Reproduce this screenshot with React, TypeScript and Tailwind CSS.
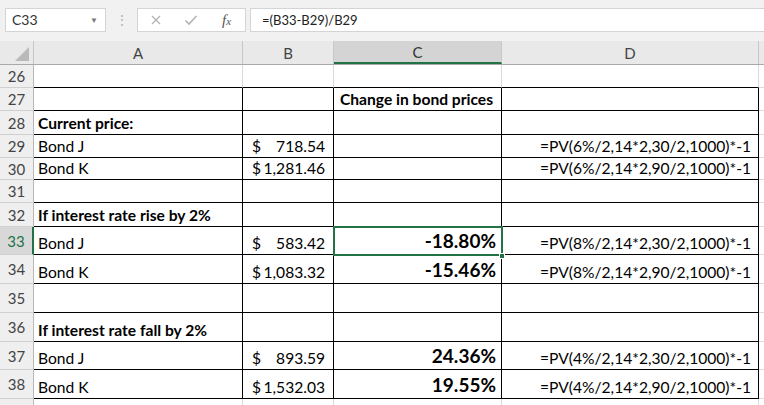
import React from "react";

type Cell = { text?: string; bold?: boolean; align?: "left" | "right"; money?: string; big?: boolean };
type Row = { n: number; h: string; cells: Cell[] };

const rows: Row[] = [
  { n: 26, h: "h-[23px]", cells: [{}, {}, {}, {}] },
  { n: 27, h: "h-[23px]", cells: [{}, {}, { text: "Change in bond prices", bold: true }, {}] },
  { n: 28, h: "h-[24px]", cells: [{ text: "Current price:", bold: true }, {}, {}, {}] },
  { n: 29, h: "h-[23px]", cells: [{ text: "Bond J" }, { money: "718.54" }, {}, { text: "=PV(6%/2,14*2,30/2,1000)*-1", align: "right" }] },
  { n: 30, h: "h-[22px]", cells: [{ text: "Bond K" }, { money: "1,281.46" }, {}, { text: "=PV(6%/2,14*2,90/2,1000)*-1", align: "right" }] },
  { n: 31, h: "h-[23px]", cells: [{}, {}, {}, {}] },
  { n: 32, h: "h-[24px]", cells: [{ text: "If interest rate rise by 2%", bold: true }, {}, {}, {}] },
  { n: 33, h: "h-[28px]", cells: [{ text: "Bond J" }, { money: "583.42" }, { text: "-18.80%", big: true }, { text: "=PV(8%/2,14*2,30/2,1000)*-1", align: "right" }] },
  { n: 34, h: "h-[29px]", cells: [{ text: "Bond K" }, { money: "1,083.32" }, { text: "-15.46%", big: true }, { text: "=PV(8%/2,14*2,90/2,1000)*-1", align: "right" }] },
  { n: 35, h: "h-[29px]", cells: [{}, {}, {}, {}] },
  { n: 36, h: "h-[29px]", cells: [{ text: "If interest rate fall by 2%", bold: true }, {}, {}, {}] },
  { n: 37, h: "h-[28px]", cells: [{ text: "Bond J" }, { money: "893.59" }, { text: "24.36%", big: true }, { text: "=PV(4%/2,14*2,30/2,1000)*-1", align: "right" }] },
  { n: 38, h: "h-[29px]", cells: [{ text: "Bond K" }, { money: "1,532.03" }, { text: "19.55%", big: true }, { text: "=PV(4%/2,14*2,90/2,1000)*-1", align: "right" }] },
  { n: 39, h: "h-[29px]", cells: [{}, {}, {}, {}] },
];

const pads = ["pl-[4px] pr-[4px]", "pl-[9px] pr-[8px]", "pl-[6px] pr-[5px]", "pl-[6px] pr-[7px]"];

function CellBox({ cell, row, col }: { cell: Cell; row: number; col: number }) {
  const right = row >= 27 && row <= 38 ? "border-r-black" : "border-r-[#dadada]";
  const bottom = row >= 26 && row <= 38 ? "border-b-black" : "border-b-[#dadada]";
  return (
    <div className={`flex items-end border-r border-b ${right} ${bottom} ${pads[col]} pb-[1px] overflow-visible whitespace-nowrap`}>
      {cell.money ? (
        <div className="flex w-full justify-between">
          <span>$</span>
          <span>{cell.money}</span>
        </div>
      ) : cell.big ? (
        <span className="ml-auto text-[19px] font-bold leading-[24px]">{cell.text}</span>
      ) : (
        <span className={`${cell.bold ? "font-bold" : ""} ${cell.align === "right" ? "ml-auto" : ""}`}>{cell.text}</span>
      )}
    </div>
  );
}

export default function App() {
  return (
    <div className="w-[764px] h-[405px] overflow-hidden bg-white text-[15.6px] text-black font-['Lato',sans-serif] leading-[20px]">
      {/* formula bar */}
      <div className="h-[41px] bg-[#f1f1f1] flex items-start pt-[8px] pl-[5px]">
        <div className="w-[101px] h-[24px] bg-white border border-[#d4d4d4] flex items-center justify-between pl-[6px] pr-[7px] text-[14px] text-[#333]">
          <span>C33</span>
          <span className="text-[8px] text-[#777]">▼</span>
        </div>
        <div className="w-[31px] h-[24px] flex items-center justify-center text-[#b5b5b5] text-[14px]">⋮</div>
        <div className="w-[109px] h-[24px] bg-white border border-[#d4d4d4] flex items-center">
          <svg width="12" height="12" viewBox="0 0 12 12" className="ml-[12px]">
            <path d="M2 2 L10 10 M10 2 L2 10" stroke="#b4b4b4" strokeWidth="1.4" />
          </svg>
          <svg width="14" height="12" viewBox="0 0 14 12" className="ml-[22px]">
            <path d="M1.5 6.5 L5 10 L12.5 2" stroke="#b4b4b4" strokeWidth="1.6" fill="none" />
          </svg>
          <span className="ml-[24px] font-['Liberation_Serif',serif] italic text-[15px] text-[#555]">
            f<span className="text-[11px]">x</span>
          </span>
        </div>
        <div className="ml-[4px] flex-1 h-[24px] bg-white border border-[#d4d4d4] border-r-0 flex items-center pl-[11px] text-[13px] text-[#222]">
          =(B33-B29)/B29
        </div>
      </div>

      {/* column headers */}
      <div className="grid grid-cols-[34px_209px_91px_168px_257px_1fr] h-[24px] bg-[#e9e9e9] text-[15px] text-[#444] border-b border-[#a9a9a9]">
        <div className="relative border-r border-[#c8c8c8]">
          <svg width="16" height="16" viewBox="0 0 16 16" className="absolute right-[3px] bottom-[2px]">
            <path d="M15 1 L15 15 L1 15 Z" fill="#b9b9b9" />
          </svg>
        </div>
        <div className="flex items-center justify-center border-r border-[#c8c8c8]">A</div>
        <div className="flex items-center justify-center border-r border-[#c8c8c8]">B</div>
        <div className="flex items-center justify-center bg-[#d4d4d4] border-r border-[#c8c8c8] border-b-2 border-b-[#217346] text-[#333]">C</div>
        <div className="flex items-center justify-center border-r border-[#c8c8c8]">D</div>
        <div />
      </div>

      {/* grid */}
      <div className="relative">
        {rows.map((r) => (
          <div key={r.n} className={`grid grid-cols-[34px_209px_91px_168px_257px_1fr] ${r.h}`}>
            <div
              className={`flex items-center justify-center text-[15px] border-b border-[#d0d0d0] ${
                r.n === 33
                  ? "bg-[#d8d8d8] text-[#217346] border-r-2 border-r-[#217346]"
                  : "bg-[#efefef] text-[#444] border-r border-r-[#b8b8b8]"
              }`}
            >
              {r.n < 39 ? r.n : ""}
            </div>
            {r.cells.map((c, i) => (
              <CellBox key={i} cell={c} row={r.n} col={i} />
            ))}
            <div className="border-b border-[#dadada]" />
          </div>
        ))}
        {/* active cell C33 */}
        <div className="absolute left-[333px] top-[161px] w-[170px] h-[30px] border-2 border-[#217346] pointer-events-none" />
        <div className="absolute left-[499px] top-[188px] w-[6px] h-[6px] bg-[#217346] border border-white pointer-events-none" />
      </div>
    </div>
  );
}
